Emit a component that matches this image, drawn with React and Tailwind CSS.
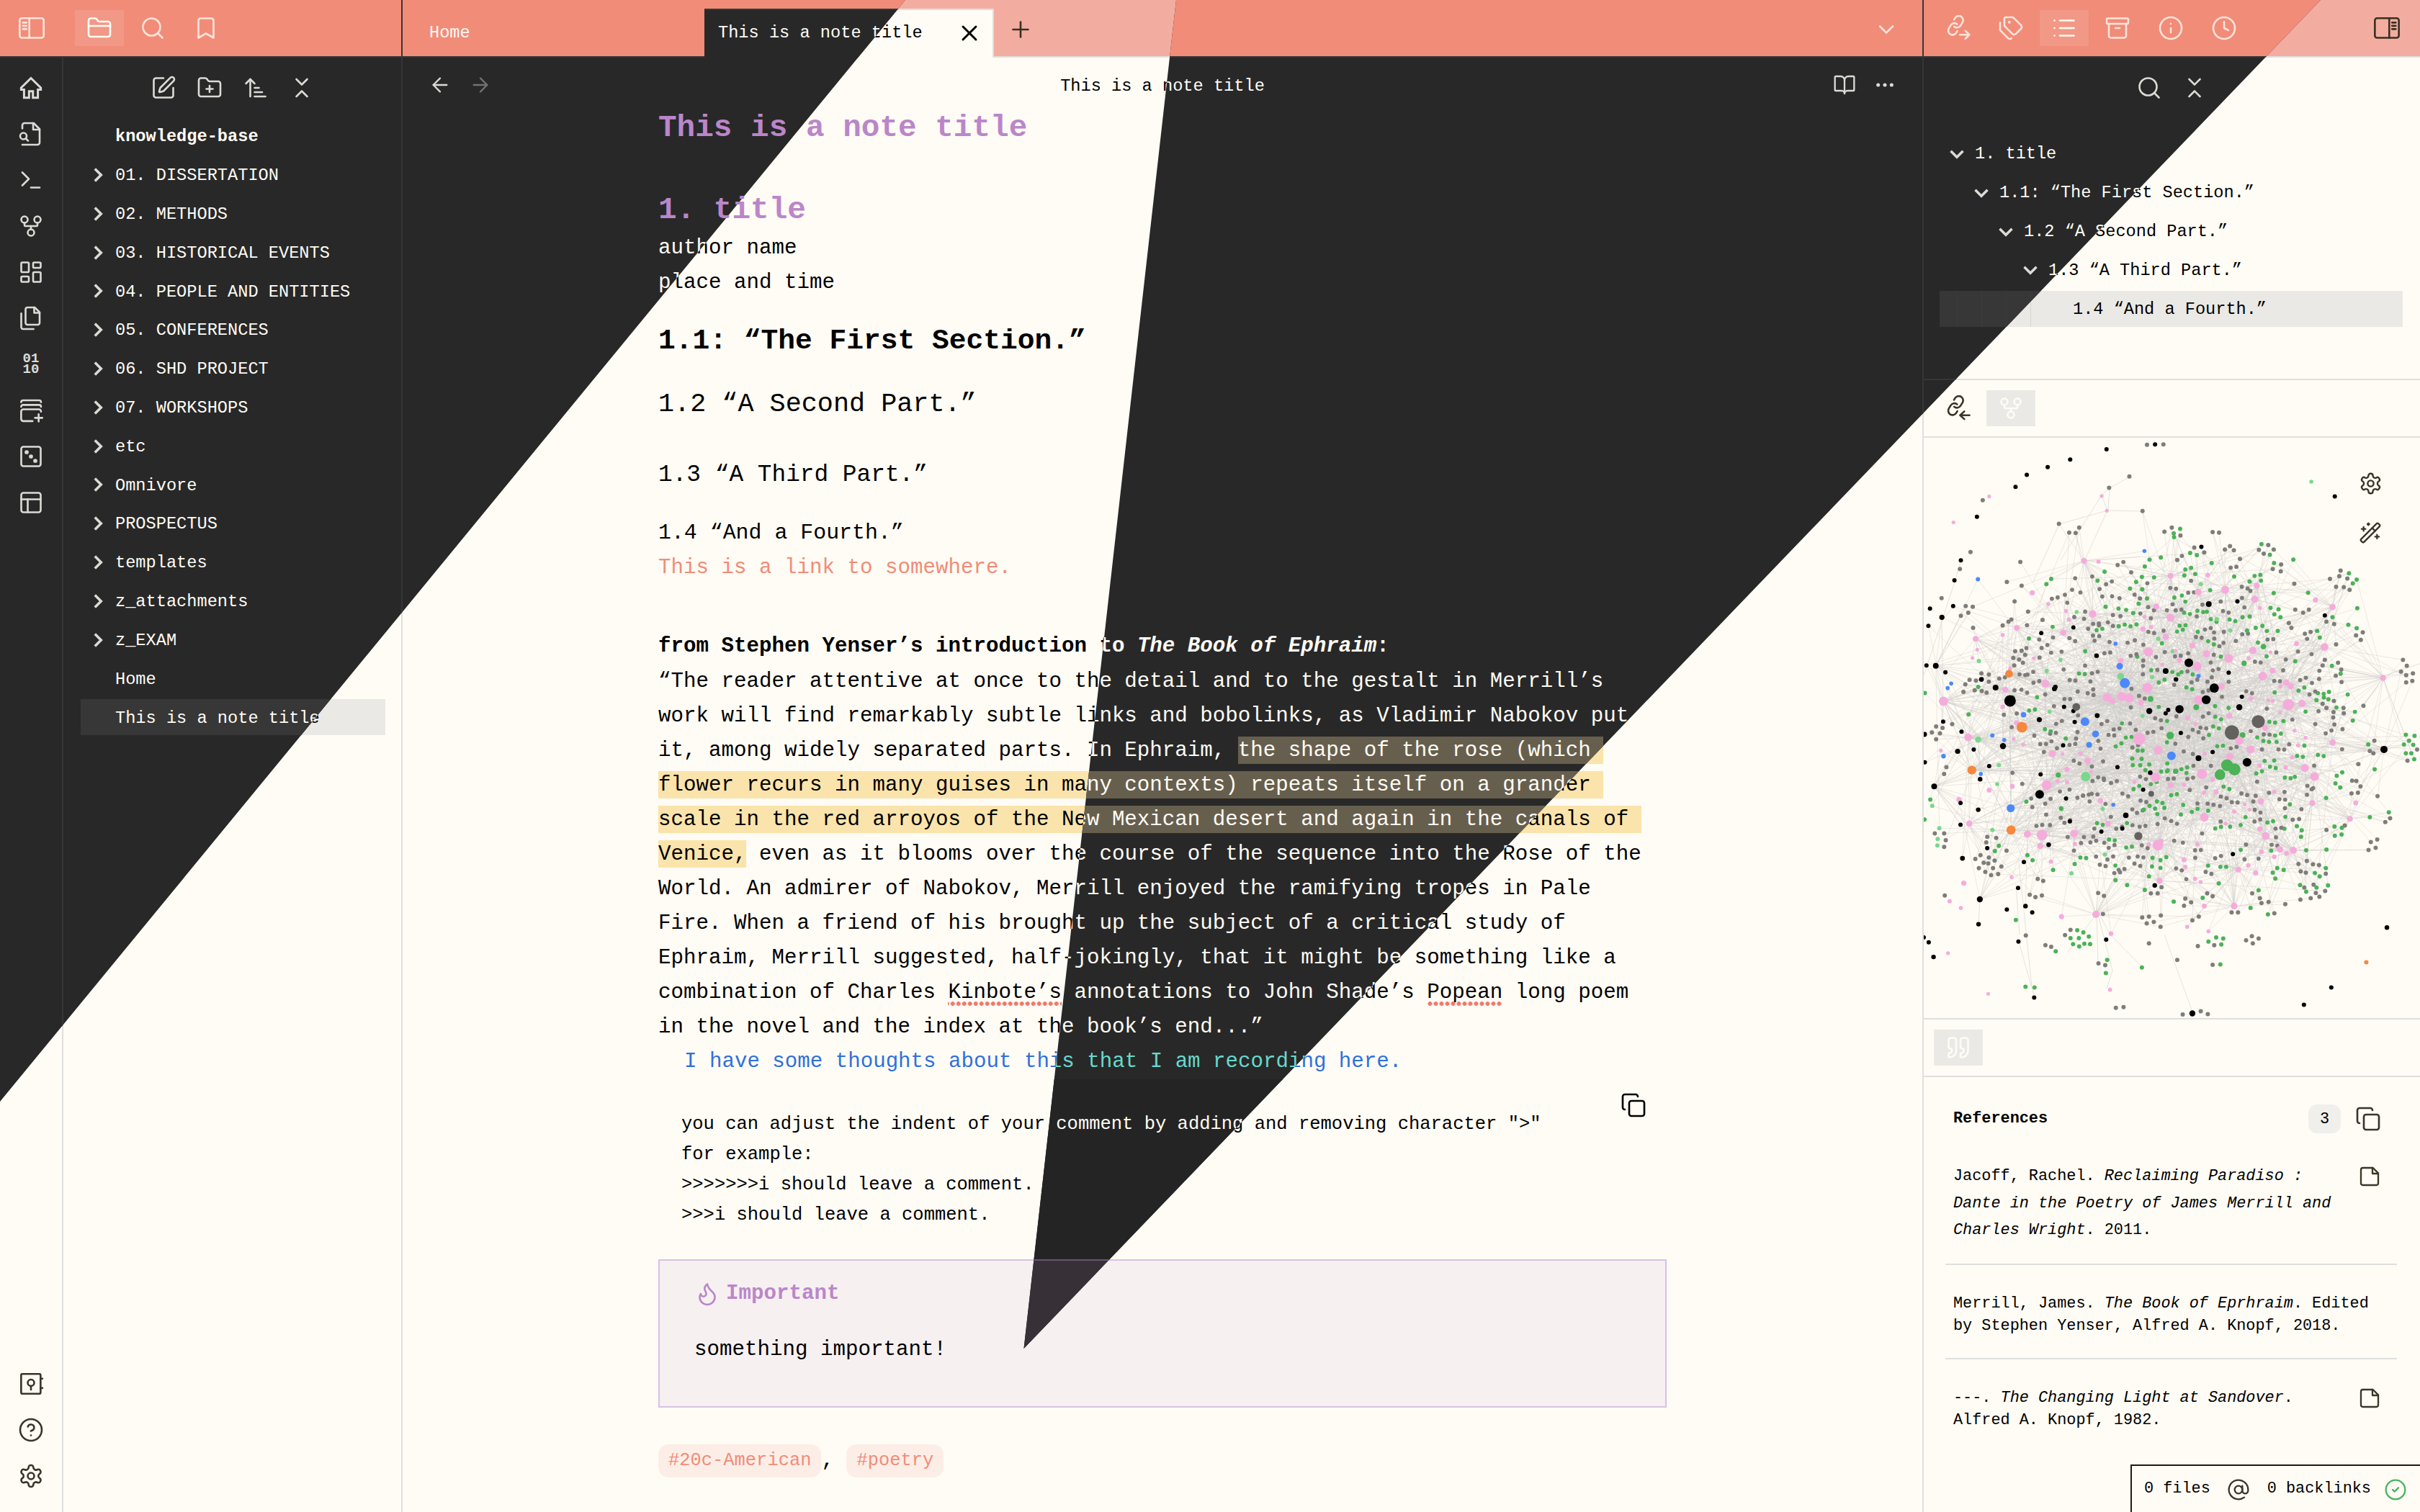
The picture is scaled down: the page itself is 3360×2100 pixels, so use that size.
import React from "react";
import {
  Archive,
  ArrowLeft,
  ArrowRight,
  ArrowUpNarrowWide,
  AtSign,
  BookOpen,
  Bookmark,
  ChevronDown,
  ChevronsDownUp,
  CircleCheck,
  Clock,
  Copy,
  Flame,
  FolderClosed,
  FolderPlus,
  GitFork,
  Info,
  LayoutDashboard,
  List,
  PanelsTopLeft,
  Plus,
  Quote,
  Search,
  SquarePen,
  Tags,
  Terminal,
  WandSparkles,
  X,
} from "lucide-react";

/* ---------- icons ---------- */

function Svg({ size = 36, w = 1.75, className = "", children }) {
  return (
    <svg
      width={size}
      height={size}
      viewBox="0 0 24 24"
      fill="none"
      stroke="currentColor"
      strokeWidth={w}
      strokeLinecap="round"
      strokeLinejoin="round"
      className={"shrink-0 " + className}
    >
      {children}
    </svg>
  );
}

const SidebarIcon = ({ right }) => (
  <Svg>
    <g transform={right ? "matrix(-1 0 0 1 24 0)" : undefined}>
      <rect x="0.9" y="2.8" width="22.2" height="18.2" rx="2" />
      <path d="M9.8 3v18M3.8 6.9h3.4M3.8 9.9h3.4M3.8 12.9h3.4" />
    </g>
  </Svg>
);

const HomeIcon = () => (
  <Svg w={2}>
    <path
      strokeLinejoin="miter"
      d="M12 3 2.9 12v1.6h2.7v7.6h4.6v-6h3.6v6h4.6v-7.6h2.7V12Z"
    />
  </Svg>
);

const FileSearchIcon = () => (
  <Svg>
    <path d="M4 22h14a2 2 0 0 0 2-2V7.5L14.5 2H6a2 2 0 0 0-2 2v3" />
    <path d="M14 2v6h6" />
    <circle cx="5" cy="14" r="3" />
    <path d="m9.3 18.3-2.1-2.1" />
  </Svg>
);

const DocumentsIcon = () => (
  <Svg>
    <path d="M15.5 2H8.6c-.4 0-.8.2-1.1.5-.3.3-.5.7-.5 1.1v12.8c0 .4.2.8.5 1.1.3.3.7.5 1.1.5h9.8c.4 0 .8-.2 1.1-.5.3-.3.5-.7.5-1.1V6.5L15.5 2z" />
    <path d="M3 7.6v12.8c0 .4.2.8.5 1.1.3.3.7.5 1.1.5h9.8" />
    <path d="M15 2v5h5" />
  </Svg>
);

const StackPlusIcon = () => (
  <Svg>
    <path d="M2.9 4.4a1.7 1.7 0 0 1 1.7-1.7h15a1.7 1.7 0 0 1 1.7 1.7" />
    <path d="M2.9 8.6a1.7 1.7 0 0 1 1.7-1.7h15a1.7 1.7 0 0 1 1.7 1.7" />
    <path d="M21.3 13.2V13a2 2 0 0 0-2-2H4.9a2 2 0 0 0-2 2v6.9a2 2 0 0 0 2 2h8.6" />
    <path d="M19.1 15.5v6.8M15.7 18.9h6.8" />
  </Svg>
);

const DiceIcon = () => (
  <Svg>
    <rect x="3" y="3" width="18" height="18" rx="2" />
    <g fill="currentColor" strokeWidth="1">
      <circle cx="8" cy="8" r="1.4" />
      <circle cx="12" cy="12" r="1.4" />
      <circle cx="16" cy="16" r="1.4" />
    </g>
  </Svg>
);

const VaultIcon = () => (
  <Svg>
    <rect x="2.9" y="2.8" width="18" height="18.4" rx="1.2" />
    <circle cx="12" cy="11" r="3" />
    <path d="M12 14v3.4M21 7.2h1.6M21 15.9h1.6" />
  </Svg>
);

const HelpIcon = () => (
  <Svg>
    <circle cx="12" cy="12" r="10" />
    <path d="M9.09 9a3 3 0 0 1 5.83 1c0 2-3 3-3 3" />
    <path d="M12 17h.01" />
  </Svg>
);

const GearIcon = ({ size }) => (
  <Svg size={size}>
    <path d="M12.22 2h-.44a2 2 0 0 0-2 2v.18a2 2 0 0 1-1 1.73l-.43.25a2 2 0 0 1-2 0l-.15-.08a2 2 0 0 0-2.73.73l-.22.38a2 2 0 0 0 .73 2.73l.15.1a2 2 0 0 1 1 1.72v.51a2 2 0 0 1-1 1.74l-.15.09a2 2 0 0 0-.73 2.73l.22.38a2 2 0 0 0 2.73.73l.15-.08a2 2 0 0 1 2 0l.43.25a2 2 0 0 1 1 1.73V20a2 2 0 0 0 2 2h.44a2 2 0 0 0 2-2v-.18a2 2 0 0 1 1-1.73l.43-.25a2 2 0 0 1 2 0l.15.08a2 2 0 0 0 2.73-.73l.22-.39a2 2 0 0 0-.73-2.73l-.15-.08a2 2 0 0 1-1-1.74v-.5a2 2 0 0 1 1-1.74l.15-.09a2 2 0 0 0 .73-2.73l-.22-.38a2 2 0 0 0-2.73-.73l-.15.08a2 2 0 0 1-2 0l-.43-.25a2 2 0 0 1-1-1.73V4a2 2 0 0 0-2-2z" />
    <circle cx="12" cy="12" r="3" />
  </Svg>
);

const LinkArrowIcon = ({ incoming }) => (
  <Svg>
    <g transform="translate(.6 -.1) scale(.8)" strokeWidth="2.2">
      <path d="M10 13a5 5 0 0 0 7.54.54l3-3a5 5 0 0 0-7.07-7.07l-1.72 1.71" transform="rotate(-14 12 12)" />
      <path d="M14 11a5 5 0 0 0-7.54-.54l-3 3a5 5 0 0 0 7.07 7.07l1.71-1.71" transform="rotate(-14 12 12)" />
    </g>
    {incoming ? (
      <path d="M23 18.5h-8.6M18.2 14.9l-3.9 3.6 3.9 3.6" />
    ) : (
      <path d="M14.2 18.2h8.6M19.2 14.6l3.7 3.6-3.7 3.6" />
    )}
  </Svg>
);

const StickyIcon = () => (
  <Svg size={32}>
    <path d="M15.5 3H5a2 2 0 0 0-2 2v14c0 1.1.9 2 2 2h14a2 2 0 0 0 2-2V8.5L15.5 3Z" />
    <path d="M15 3v6h6" />
  </Svg>
);

const DotsIcon = () => (
  <svg width="32" height="32" viewBox="0 0 24 24" fill="currentColor">
    <circle cx="5" cy="12" r="1.9" />
    <circle cx="12" cy="12" r="1.9" />
    <circle cx="19" cy="12" r="1.9" />
  </svg>
);

const Fold = ({ open }) => (
  <svg
    width="24"
    height="24"
    viewBox="0 0 24 24"
    fill="none"
    stroke="currentColor"
    strokeWidth="3.6"
    className="shrink-0 text-(--icon)"
  >
    <path d={open ? "M3.5 7.8l8.5 8.5 8.5-8.5" : "M7.8 3.5l8.5 8.5-8.5 8.5"} />
  </svg>
);

const I = { size: 36, strokeWidth: 1.75, className: "shrink-0" };
const I32 = { size: 32, strokeWidth: 1.75, className: "shrink-0" };

/* ---------- top bar ---------- */

const TabIcon = ({ active, children }) => (
  <div
    className={
      "flex h-[50px] w-[68px] items-center justify-center " +
      (active ? "bg-white/10 text-[#fffcf5]" : "text-(--headicon)")
    }
  >
    {children}
  </div>
);

function TopBar() {
  return (
    <header className="flex h-[80px] shrink-0 text-[23.65px]">
      <div className="flex w-[559px] items-center border-r-2 border-b-2 border-(--line) bg-(--accent) pl-[26px] text-(--headicon)">
        <SidebarIcon />
        <div className="ml-[42px] flex gap-[6px]">
          <TabIcon active><FolderClosed {...I} /></TabIcon>
          <TabIcon><Search {...I} /></TabIcon>
          <TabIcon><Bookmark {...I} /></TabIcon>
        </div>
      </div>

      <div className="flex w-[2110px] bg-(--accent)">
        <div className="flex w-[419px] items-center border-b-2 border-(--line) pt-[14px] pl-[37px] text-[#fffcf5]">
          Home
        </div>
        <div className="mt-[12px] flex w-[402px] items-center justify-between border-t-2 border-r-2 border-(--line) bg-(--bg) pr-[14px] pb-[2px] pl-[19px] text-(--text)">
          <span>This is a note title</span>
          <X {...I} strokeWidth={2} />
        </div>
        <div className="flex flex-1 items-center justify-between border-b-2 border-(--line) pt-[4px] pr-[32px] pl-[19px] text-(--headicon)">
          <Plus {...I} />
          <ChevronDown {...I} />
        </div>
      </div>

      <div className="flex w-[691px] items-center justify-between border-b-2 border-l-2 border-(--line) bg-(--accent) pr-[28px] pl-[13px] text-(--headicon)">
        <div className="flex gap-[6px]">
          <TabIcon><LinkArrowIcon /></TabIcon>
          <TabIcon><Tags {...I} /></TabIcon>
          <TabIcon active><List {...I} /></TabIcon>
          <TabIcon><Archive {...I} /></TabIcon>
          <TabIcon><Info {...I} /></TabIcon>
          <TabIcon><Clock {...I} /></TabIcon>
        </div>
        <SidebarIcon right />
      </div>
    </header>
  );
}

/* ---------- ribbon and file tree ---------- */

function Ribbon() {
  return (
    <nav className="flex w-[88px] flex-col items-center justify-between border-r-2 border-(--line) pt-[24px] pb-[32px] text-(--icon)">
      <div className="flex flex-col items-center gap-[28px]">
        <HomeIcon />
        <FileSearchIcon />
        <Terminal {...I} />
        <GitFork {...I} />
        <LayoutDashboard {...I} />
        <DocumentsIcon />
        <div className="flex h-[36px] flex-col justify-center text-[19px] leading-[15.5px] font-bold">
          <span>01</span>
          <span>10</span>
        </div>
        <StackPlusIcon />
        <DiceIcon />
        <PanelsTopLeft {...I} />
      </div>
      <div className="flex flex-col items-center gap-[28px]">
        <VaultIcon />
        <HelpIcon />
        <GearIcon size={36} />
      </div>
    </nav>
  );
}

const FOLDERS = [
  "01. DISSERTATION",
  "02. METHODS",
  "03. HISTORICAL EVENTS",
  "04. PEOPLE AND ENTITIES",
  "05. CONFERENCES",
  "06. SHD PROJECT",
  "07. WORKSHOPS",
  "etc",
  "Omnivore",
  "PROSPECTUS",
  "templates",
  "z_attachments",
  "z_EXAM",
];

function FileTree() {
  return (
    <aside className="w-[471px] border-r-2 border-(--line) pt-[24px] text-[23.65px] text-(--text)">
      <div className="flex justify-center gap-[28px] text-(--icon)">
        <SquarePen {...I} />
        <FolderPlus {...I} />
        <ArrowUpNarrowWide {...I} />
        <ChevronsDownUp {...I} />
      </div>
      <div className="mt-[30px] mb-[8px] pl-[72px] leading-[40px] font-bold">knowledge-base</div>
      <div className="flex flex-col gap-[4px] pr-[22px] pl-[24px]">
        {FOLDERS.map((name) => (
          <div key={name} className="flex h-[49.82px] items-center gap-[12px] pl-[12px]">
            <Fold />
            <span className="pt-[2px]">{name}</span>
          </div>
        ))}
        <div className="flex h-[49.82px] items-center pt-[2px] pl-[48px]">Home</div>
        <div className="flex h-[49.82px] items-center bg-(--hover) pt-[2px] pl-[48px]">
          This is a note title
        </div>
      </div>
    </aside>
  );
}

/* ---------- note ---------- */

const Mark = ({ children }) => (
  <span className="bg-(--mark) pt-[3px] pb-[2px]">{children}</span>
);

const Misspelt = ({ children }) => (
  <span className="bg-[radial-gradient(circle,#f0786c_2.6px,transparent_3.2px)] bg-[length:8px_8px] bg-bottom bg-repeat-x pb-[3px]">
    {children}
  </span>
);

const Tag = ({ children }) => (
  <span className="flex h-[46px] items-center rounded-[14px] bg-(--tag) px-[14px] text-[25.45px] text-[#f28c78]">
    {children}
  </span>
);

function Note() {
  return (
    <main className="w-[2110px] text-(--text)">
      <div className="flex h-[76px] items-center justify-between pr-[36px] pl-[36px] text-[23.65px]">
        <div className="flex w-[120px] gap-[24px] text-(--icon)">
          <ArrowLeft {...I32} />
          <ArrowRight {...I32} className="text-(--faint)" />
        </div>
        <span className="pt-[3px]">This is a note title</span>
        <div className="flex w-[120px] justify-end gap-[24px] text-(--icon)">
          <BookOpen {...I32} />
          <DotsIcon />
        </div>
      </div>

      <article className="ml-[355px] w-[1400px] text-[29.17px] leading-[48px] whitespace-pre">
        <h1 className="text-[42.7px] leading-[43px] font-bold text-[#bb86c9]">This is a note title</h1>
        <h1 className="mt-[64.6px] text-[42.7px] leading-[56px] font-bold text-[#bb86c9]">1. title</h1>
        <p className="mt-[1px]">author name</p>
        <p>place and time</p>
        <h2 className="mt-[29px] text-[39.6px] leading-[56px] font-bold">1.1: “The First Section.”</h2>
        <h3 className="mt-[31px] text-[36.8px] leading-[56px]">1.2 “A Second Part.”</h3>
        <h4 className="mt-[47.5px] text-[32.8px] leading-[48px]">1.3 “A Third Part.”</h4>
        <h5 className="mt-[32px] text-[29.9px] leading-[48px]">1.4 “And a Fourth.”</h5>
        <p className="mt-[1px] text-[#f28c78]">This is a link to somewhere.</p>
        <p className="mt-[60.5px] font-bold">
          from Stephen Yenser’s introduction to <em>The Book of Ephraim</em>:
        </p>
        <p className="mt-[1px]">“The reader attentive at once to the detail and to the gestalt in Merrill’s</p>
        <p>work will find remarkably subtle links and bobolinks, as Vladimir Nabokov put</p>
        <p>it, among widely separated parts. In Ephraim, <Mark>{"the shape of the rose (which "}</Mark></p>
        <p><Mark>{"flower recurs in many guises in many contexts) repeats itself on a grander "}</Mark></p>
        <p><Mark>{"scale in the red arroyos of the New Mexican desert and again in the canals of "}</Mark></p>
        <p><Mark>Venice,</Mark> even as it blooms over the course of the sequence into the Rose of the</p>
        <p>World. An admirer of Nabokov, Merrill enjoyed the ramifying tropes in Pale</p>
        <p>Fire. When a friend of his brought up the subject of a critical study of</p>
        <p>Ephraim, Merrill suggested, half-jokingly, that it might be something like a</p>
        <p>combination of Charles <Misspelt>Kinbote’s</Misspelt> annotations to John Shade’s <Misspelt>Popean</Misspelt> long poem</p>
        <p>in the novel and the index at the book’s end...”</p>
        <p className="pl-[36px] text-[29.13px] text-(--comment)">I have some thoughts about this that I am recording here.</p>

        <div className="relative h-[250px] bg-(--code) pt-[42px] pl-[32px] text-[25.5px] leading-[42.2px]">
          <p>you can adjust the indent of your comment by adding and removing character "&gt;"</p>
          <p>for example:</p>
          <p>&gt;&gt;&gt;&gt;&gt;&gt;&gt;i should leave a comment.</p>
          <p>&gt;&gt;&gt;i should leave a comment.</p>
          <Copy size={36} strokeWidth={1.75} className="absolute top-[18px] right-[28px]" />
        </div>

        <section className="h-[206px] border-2 border-(--callline) bg-(--call) pt-[22px] pl-[48px]">
          <div className="flex items-center gap-[8px] font-bold text-[#bb86c9]">
            <Flame {...I} />
            <span>Important</span>
          </div>
          <p className="mt-[30px]">something important!</p>
        </section>

        <div className="mt-[50px] flex items-center">
          <Tag>#20c-American</Tag>
          <span>{", "}</span>
          <Tag>#poetry</Tag>
        </div>
      </article>
    </main>
  );
}

/* ---------- graph ---------- */

const SMALL = 2.9;
const PINK = [
  228,171,2.6, 117,240,2.6, 578,170,2.6, 594,209,2.6, 523,342,4.2, 568,344,3, 792,382,4, 362,427,3.6, 412,457,2.8, 550,483,5.2,
  314,520,4, 186,549,4, 270,539,2.8, 458,533,4.4, 467,475,2.8, 476,498,3, 748,463,4, 792,493,5.4, 878,425,4.6, 962,419,5.4,
  1060,408,4.2, 1054,444,5, 908,380,3.2, 1243,446,3.6, 1296,465,4.4, 1271,571,5.4, 1184,562,3.4, 1070,467,2.7, 1048,580,5.2, 973,601,6,
  904,589,5, 875,622,6.2, 860,567,4, 777,544,4.2, 723,584,6.4, 706,523,3.6, 732,518,2.9, 638,607,3.6, 1079,648,6, 1109,634,4,
  1152,665,4.4, 1166,675,4.2, 1159,724,8, 1201,721,5, 1453,653,4.2, 951,675,4.4, 720,679,6.8, 595,705,6, 612,715,4, 640,702,6.4,
  664,707,6.2, 700,719,4, 403,668,5.6, 278,684,4.2, 86,715,6.4, 270,730,3.2, 367,601,2.7, 293,628,2.6, 191,578,2.6, 176,600,2.6,
  880,712,6.4, 975,754,4, 1042,708,3.4, 1086,786,4, 1006,820,6, 1041,843,5.6, 976,862,5, 846,760,3.2, 870,776,2.8, 695,815,8.4,
  753,845,6, 534,873,4.6, 512,854,3.2, 424,854,5, 163,811,5.4, 78,846,2.7, 313,772,3.6, 407,938,7, 470,896,3.6, 745,917,6.8,
  680,929,3, 793,938,4, 890,908,7, 934,956,3.4, 1210,892,5.6, 1240,915,6, 1296,825,4.4, 1233,985,4, 1368,985,3.4, 1350,1027,4,
  1150,891,3, 1170,864,2.8, 1189,832,2.8, 1178,793,2.7, 1073,981,4.6, 1115,956,3, 897,1023,6, 990,1008,3, 964,1040,2.6, 1070,1054,3.6,
  1088,1073,5.4, 1132,1108,4.6, 1153,1119,3.4, 1174,1111,5, 1115,1128,3.2, 1075,1115,3.4, 753,1097,7.4, 763,1087,3.4, 725,1095,3, 834,1136,3.4,
  838,1155,3, 876,1095,3, 1034,1151,3.2, 1003,1162,4, 1057,1171,3.6, 868,1187,3, 886,1195,2.7, 758,1192,4.2, 597,1040,4, 574,979,3.8,
  492,1066,5.4, 495,1094,2.8, 392,1070,7.4, 387,1099,4.4, 347,1068,5, 420,1141,3, 166,1040,4.4, 134,976,3.6, 228,951,3.4, 298,1182,2.7,
  149,1198,3.6, 105,1246,3, 140,1264,2.8, 453,1287,3.6, 560,1281,5, 607,1332,3.2, 844,1314,2.8, 910,1326,2.8, 990,1259,4.6, 897,1259,3.4,
  100,1384,2.6, 225,1492,2.6, 604,1481,2.9, 1134,676,3, 1096,712,2.8, 1110,714,2.8, 1133,745,2.6, 820,607,3.4, 808,581,2.6, 766,618,2.6,
  711,491,2.7, 1103,585,2.6, 1035,601,3, 300,941,3.4, 334,830,2.7, 304,815,2.7, 456,855,2.6, 470,930,2.9, 545,903,2.7, 834,937,3,
  896,958,3, 924,923,3.2, 1069,886,3.2, 1023,989,2.7, 1038,1003,2.7, 898,854,2.8, 1212,812,2.7, 441,927,3,
];
const BLACK = [
  593,46,3, 480,73,3, 410,93,3, 345,114,3, 310,146,3, 190,225,3, 744,33,3, 1303,171,3, 140,341,3, 120,394,3,
  116,462,3, 44,469,3, 81,492,3.6, 39,515,3, 62,621,4, 33,620,3, 92,638,3, 204,657,3.4, 248,679,4, 293,714,8,
  434,677,3.2, 431,682,3.4, 490,519,2.9, 390,534,3, 562,594,3.2, 888,305,3, 911,457,4, 1000,450,3, 1272,487,3, 849,613,6,
  777,635,4, 809,657,3.2, 928,680,6.4, 903,711,6.2, 820,736,5.8, 785,738,3, 777,747,3, 726,741,4.2, 1014,703,3, 1006,731,4.2,
  973,639,3, 824,799,3, 923,850,3, 879,866,4, 1030,877,6, 1456,843,5, 461,730,3, 490,741,3, 494,770,3, 564,753,3.4,
  384,764,3.6, 458,832,3, 271,834,4.2, 180,843,3, 130,848,3.6, 142,796,3, 85,769,3, 27,803,3.4, 28,877,3, 228,887,3,
  200,922,3.2, 57,941,4, 388,909,3, 385,962,6, 467,973,3, 139,985,3, 194,1003,3.2, 139,1043,3, 145,1132,3.4, 222,1105,3,
  336,1142,3, 413,1096,3.2, 479,1034,3, 577,1061,3, 642,1053,3, 653,1018,3.8, 627,890,3, 707,950,3, 729,905,3.2, 986,1121,3,
  743,1204,3.2, 318,1211,3, 199,1241,4.2, 341,1259,3.2, 283,1268,3, 362,1276,3, 195,1307,3.2, 319,1353,3, 592,1348,3, 25,1342,2.8,
  40,1355,3, 55,1394,3.2, 368,1502,3, 860,1544,4.2, 1465,1316,3.2, 1292,1475,3, 1207,1521,3,
];
const BLUE = [
  193,391,3, 711,316,2.8, 621,562,2.8, 634,622,4.6, 650,667,7, 110,668,2.8, 99,680,2.8, 335,751,3.8, 526,769,6, 559,802,4.8,
  539,831,4, 238,806,3, 275,818,2.8, 86,861,3.2, 202,908,2.8, 795,860,6, 879,648,3, 295,999,5.6, 614,990,2.8,
];
const ORANGE = [290,642,5.4, 330,784,7.4, 174,898,6.2, 296,1057,6.4, 1401,1408,3];
const MINT = [
  1230,132,2.8, 886,404,3, 936,497,3, 500,478,2.8, 978,527,3, 754,549,3, 799,582,3, 637,649,4.8, 705,754,2.8, 528,915,6.6,
  196,608,3, 407,635,3, 194,817,4.2, 258,885,3, 253,935,2.8, 416,743,2.8, 73,1052,3, 68,1081,3, 67,1098,3, 51,993,3,
  238,1057,3, 588,1122,3, 484,1172,3, 735,651,3, 581,1001,3, 450,605,2.8,
];
const GREEN = [
  968,885,8.2, 991,896,8.4, 946,910,7.4, 791,806,5.2, 872,731,4, 730,709,4, 808,901,3.8, 1016,805,4, 443,911,3.6, 1021,614,3.6,
  1081,570,3.8, 301,706,3.6, 452,1000,3.2, 822,257,3, 802,269,3, 803,279,3, 853,321,3, 874,327,3, 920,348,3, 1075,298,3,
  1101,326,3, 1114,348,3, 1174,339,3, 990,384,3, 1038,397,3, 835,381,3, 762,333,3, 727,339,3, 712,357,3, 587,371,3,
  565,395,3, 421,390,3, 406,404,3, 1347,375,3, 1371,392,3, 1359,402,3, 1220,427,3, 1373,468,3, 1296,492,3, 1345,512,3,
  1371,521,3, 1248,528,3, 1103,467,3, 1128,471,3, 1115,484,3, 1134,492,3, 1113,428,3, 1038,490,3, 1016,492,3, 1030,527,3,
  1057,520,3, 1078,515,3, 741,386,3, 703,385,3, 685,398,3, 704,418,3, 719,442,3, 804,440,3, 693,456,3, 676,481,3,
  590,464,3, 631,516,3, 1524,804,3, 1551,807,3, 1534,820,3, 1518,830,3, 1547,831,3, 1524,853,3, 1541,853,3, 1550,869,3,
  1407,830,3, 1359,766,3, 1427,896,3, 1326,904,3, 1309,913,3, 1305,933,3, 1320,944,3, 1276,972,3, 1471,1010,3, 1412,1023,3,
  1325,1051,3, 1302,1048,3, 1303,1072,3, 1324,1069,3, 1277,1109,3, 1214,1111,3, 1275,1158,3, 1282,1204,3, 1241,1171,3, 1256,1180,3,
  1195,1203,3, 1214,1221,3, 1246,1210,3, 1124,1158,3, 1110,1170,3, 1144,1163,3, 1118,1186,3, 1185,1047,3, 1200,1058,3, 1198,1075,3,
  502,1323,3, 481,1344,3, 521,1329,3, 538,1340,3, 507,1344,3, 489,1360,3, 524,1359,3, 542,1360,3, 508,1366,3, 435,1379,3,
  595,1402,3, 591,1437,3, 703,1422,3, 341,1473,3, 369,1475,3, 311,1296,3, 934,1342,3, 956,1345,3, 910,1353,3, 950,1361,3,
  947,1414,3, 1095,1281,3, 1066,1217,3, 1041,1264,3, 942,1199,3, 892,1237,3, 802,1247,3, 712,1216,3, 657,1203,3, 621,1190,3,
  45,976,3, 27,1029,3, 28,693,3, 164,750,3, 194,677,3, 705,846,3, 690,846,3, 673,867,3, 675,885,3, 698,885,3,
  702,868,3, 714,898,3, 726,883,3, 750,981,3, 773,998,3, 727,993,3, 709,1003,3, 744,1000,3, 751,1015,3, 767,985,3,
  427,1163,3, 494,1147,3, 347,1124,3, 363,1137,3, 258,1099,3, 246,1113,3, 1321,642,3, 1294,621,3, 1246,712,3, 1269,705,3,
  1285,690,3, 1283,710,3,
];
const GRAY = [
  1065,769,9, 983,798,10, 499,730,5.4, 692,1073,5.6, 732,961,4, 719,34,3, 770,33,3, 664,118,3, 601,148,3, 208,181,3,
  705,210,3, 445,244,3, 508,254,3, 477,267,3, 497,268,3, 170,319,3, 137,364,3, 325,345,3, 283,398,3, 329,408,3,
  80,441,3, 155,462,3, 177,464,3, 163,480,3, 140,488,3, 178,520,3, 307,450,3, 349,477,3, 270,514,3, 297,498,3,
  394,499,3, 288,504,3, 773,265,3, 796,254,3, 823,275,3, 923,266,3, 943,267,3, 866,307,3, 897,320,3, 813,340,3,
  961,312,3, 977,303,3, 989,314,3, 1008,337,3, 1067,313,3, 1096,300,3, 1113,312,3, 1082,323,3, 1136,352,3, 1110,364,3,
  1135,370,3, 1177,403,3, 1321,368,3, 1288,390,3, 1317,383,3, 1342,389,3, 1307,411,3, 1331,412,3, 1349,419,3, 1515,605,3,
  1509,636,3, 1527,621,3, 1546,641,3, 1525,646,3, 1525,665,3, 1544,661,3, 1559,843,3, 1529,873,3, 1390,532,3, 1369,540,3,
  1384,552,3, 1392,727,3, 1426,820,3, 1412,847,3, 1423,853,3, 1376,882,3, 1436,967,3, 1475,1026,3, 1460,1036,3, 1435,1082,3,
  1415,1089,3, 1408,1110,3, 1430,1104,3, 1383,941,3, 1357,926,3, 1370,927,3, 1355,960,3, 1375,958,3, 1334,1045,3, 1277,1057,3,
  1216,1139,3, 1235,1148,3, 1254,1150,3, 1275,1173,3, 1273,1219,3, 1255,1234,3, 1228,1238,3, 1196,1242,3, 1149,1254,3, 1115,1278,3,
  1097,1248,3, 1075,1251,3, 1046,1225,3, 1070,1238,3, 1237,1202,3, 1208,1210,3, 1244,1224,3, 1197,1167,3, 1190,1147,3, 1213,1170,3,
  982,1276,3, 1002,1276,3, 1045,1339,3, 1066,1345,3, 1027,1350,3, 1048,1358,3, 928,1363,3, 877,1365,3, 923,1415,3, 813,1402,3,
  725,1358,3, 704,1289,3, 725,1287,3, 740,1301,3, 718,1305,3, 762,1284,3, 761,1314,3, 622,1529,3, 646,1527,3, 830,1547,3,
  886,1538,3, 908,1546,3, 568,1411,3, 589,1416,3, 403,1363,3, 421,1367,3, 464,1336,3, 481,1322,3, 342,1337,3, 354,1229,3,
  372,1235,3, 392,1231,3, 379,1187,3, 396,1192,3, 90,1231,3, 185,1134,3, 201,1124,3, 211,1144,3, 196,1158,3, 227,1130,3,
  225,1146,3, 245,1138,3, 240,1158,3, 266,1154,3, 256,1174,3, 234,1177,3, 216,1168,3, 282,1112,3, 250,1078,3, 219,1090,3,
  222,1075,3, 59,1066,3, 88,1066,3, 93,1084,3, 88,1102,3, 63,782,3, 83,786,3, 75,800,3, 50,798,3, 63,816,3,
  154,670,3, 167,658,3, 187,660,3, 204,641,3, 227,644,3, 183,686,3, 205,688,3, 220,692,3, 227,663,3, 148,690,3,
  309,582,3, 329,581,3, 340,592,3, 303,600,3, 321,604,3, 333,613,3, 306,620,3, 88,908,3, 95,890,3, 113,776,3,
  1168,520,3, 1180,472,3, 1160,507,3, 1301,510,3, 1307,564,3, 1277,504,3, 1272,605,3, 1313,613,3, 1265,620,3, 1323,631,3,
  1306,647,3, 1330,733,3, 1300,714,3, 1265,722,3, 1277,733,3, 1299,744,3, 1331,747,3, 1298,758,3, 567,1224,3, 585,1232,3,
  582,1280,3, 838,1239,3, 856,1249,3, 834,1258,3, 731,1225,3, 752,1225,3, 764,1209,3, 906,1225,3, 923,1233,3, 880,1287,3,
  860,1297,3,
];

const COLORS = {
  pink: "#f5acdb",
  black: "#000000",
  blue: "#4c88f8",
  orange: "#f6873c",
  mint: "#7bd78b",
  green: "#4bb257",
  gray: "#7f7d79",
  dark: "#64625f",
};

function buildGraph() {
  let seed = 20240917;
  const rand = () => {
    seed = (seed * 1664525 + 1013904223) % 4294967296;
    return seed / 4294967296;
  };
  const nodes = [];
  const add = (list, color) => {
    for (let i = 0; i < list.length; i += 3) {
      nodes.push({
        x: (list[i] - 24.6) / 2.24,
        y: (list[i + 1] - 15.3) / 1.912,
        r: list[i + 2],
        c: color,
      });
    }
  };
  add(GRAY.slice(15), "gray");
  add(GREEN.slice(9), "green");
  add(MINT, "mint");
  add(PINK, "pink");
  add(BLUE, "blue");
  add(ORANGE, "orange");
  add(BLACK, "black");
  add(GRAY.slice(0, 15), "dark");
  add(GREEN.slice(0, 9), "green");

  // Leaf notes scattered through the body of the vault, in little groups.
  const filler = [];
  const blocked = (x, y, d) =>
    nodes.some((n) => Math.hypot(n.x - x, n.y - y) < n.r + d) ||
    filler.some((n) => Math.hypot(n.x - x, n.y - y) < d + 3);
  let tries = 0;
  while (filler.length < 540 && tries < 9000) {
    tries += 1;
    const a = rand() * Math.PI * 2;
    const q = Math.pow(rand(), 0.55);
    const x = 345 + Math.cos(a) * q * 240 + (rand() - 0.5) * 30;
    const y = 390 + Math.sin(a) * q * 228;
    if (x < 20 || blocked(x, y, 4.4)) continue;
    const c = rand() < 0.27 + (x > 300 ? 0.04 : -0.1) ? "green" : "gray";
    filler.push({ x, y, r: SMALL, c });
    if (rand() < 0.35) {
      filler.push({ x: x + 8, y: y + (rand() - 0.5) * 9, r: SMALL, c });
    }
  }
  const all = [...filler, ...nodes];

  const hubs = nodes.filter((n) => n.r >= 4 && n.y > 100 && n.y < 740);
  const lines = [];
  const link = (p, q) =>
    lines.push(`M${p.x.toFixed(1)} ${p.y.toFixed(1)}L${q.x.toFixed(1)} ${q.y.toFixed(1)}`);
  const inside = (n) => Math.hypot((n.x - 330) / 365, (n.y - 395) / 300) < 1;
  all.forEach((n) => {
    if (!inside(n)) return;
    const sorted = hubs
      .filter((h) => h !== n)
      .map((h) => ({ h, d: Math.hypot(h.x - n.x, h.y - n.y) }))
      .sort((p, q) => p.d - q.d);
    link(n, sorted[Math.floor(rand() * 4)].h);
    if (rand() < 0.7) link(n, sorted[Math.floor(rand() * 24)].h);
  });
  const central = hubs.filter((h) => h.r >= 5.4);
  hubs.forEach((h) => {
    const count = Math.round(h.r * 1.9);
    for (let i = 0; i < count; i += 1) {
      link(
        h,
        rand() < 0.45
          ? central[Math.floor(rand() * central.length)]
          : filler[Math.floor(rand() * filler.length)]
      );
    }
  });
  return { nodes: all, edges: lines.join("") };
}

const GRAPH = buildGraph();
const OUTLYING =
  "M286 54L258 70L247 80L255 101L304 102M255 101L188 120L152 200M255 101L223 171L300 165M247 80L190 170M258 70L256 101M334 690L374 800M638 331L700 310M638 331L560 260M638 331L480 300M640 434L560 425M640 434L520 380M640 434L600 425M259 690L240 655L262 740L254 765M132 700L153 775M132 590L150 762M133 690L128 620M78 640L76 676M200 715L239 662M303 735L259 690M242 730L240 663M27 363L10 320M25 255L43 200L52 170M25 255L0 330M25 255L27 363M25 255L40 235";

function Graph() {
  return (
    <svg width="689" height="806" viewBox="0 0 689 806" className="block">
      <path d={GRAPH.edges} stroke="#cfcecb" strokeOpacity="0.42" strokeWidth="1" fill="none" />
      <path d={OUTLYING} stroke="#d8d7d3" strokeOpacity="0.7" strokeWidth="1" fill="none" />
      {GRAPH.nodes.map((n, i) => (
        <circle key={i} cx={n.x} cy={n.y} r={n.r} fill={COLORS[n.c]} />
      ))}
    </svg>
  );
}

/* ---------- right sidebar ---------- */

const OUTLINE = [
  "1. title",
  "1.1: “The First Section.”",
  "1.2 “A Second Part.”",
  "1.3 “A Third Part.”",
];

const Guide = () => <div className="h-[50px] w-[34px] shrink-0 border-l border-(--guide)" />;

function Outline() {
  return (
    <section className="h-[448px] border-b-2 border-(--line) pt-[24px] text-[23.6px]">
      <div className="flex justify-center gap-[27px] text-(--icon)">
        <Search {...I} />
        <ChevronsDownUp {...I} />
      </div>
      <div className="mt-[49px] mr-[24px] ml-[22px] flex flex-col gap-[4px]">
        {OUTLINE.map((title, i) => (
          <div key={title} className="flex h-[49.82px] items-center pl-[12px]">
            {i > 0 && (
              <div className="flex pl-[12px] -mr-[12px] opacity-0">
                {OUTLINE.slice(0, i).map((t) => (
                  <Guide key={t} />
                ))}
              </div>
            )}
            <Fold open />
            <span className="pl-[13px]">{title}</span>
          </div>
        ))}
        <div className="flex h-[49.82px] items-center bg-(--hover) pl-[24px]">
          {OUTLINE.map((t) => (
            <Guide key={t} />
          ))}
          <span className="pt-[1px] pl-[25px]">1.4 “And a Fourth.”</span>
        </div>
      </div>
    </section>
  );
}

function References() {
  return (
    <section className="flex-1 pt-[38px] pl-[30px] text-[21.85px] whitespace-pre">
      <div className="flex h-[40px] items-center pr-[54px] pl-[11px]">
        <h6 className="flex-1 font-bold">References</h6>
        <span className="mr-[20px] flex h-[40px] w-[45px] items-center justify-center rounded-[12px] bg-[#f0efec] pt-[2px]">
          3
        </span>
        <Copy {...I} className="text-(--icon)" />
      </div>
      <div className="mr-[32px] pt-[41px]">
        <div className="flex justify-between border-b-2 border-(--line) pr-[22px] pb-[27px] pl-[11px]">
          <div className="leading-[37.7px]">
            <p>Jacoff, Rachel. <em>Reclaiming Paradiso :</em></p>
            <p><em>Dante in the Poetry of James Merrill and</em></p>
            <p><em>Charles Wright</em>. 2011.</p>
          </div>
          <div className="pt-[3px] text-(--icon)"><StickyIcon /></div>
        </div>
        <div className="border-b-2 border-(--line) pt-[38px] pb-[28px] pl-[11px] leading-[31.3px]">
          <p>Merrill, James. <em>The Book of Eprhraim</em>. Edited</p>
          <p>by Stephen Yenser, Alfred A. Knopf, 2018.</p>
        </div>
        <div className="flex justify-between pt-[38px] pr-[22px] pl-[11px] leading-[31.3px]">
          <div>
            <p>---. <em>The Changing Light at Sandover</em>.</p>
            <p>Alfred A. Knopf, 1982.</p>
          </div>
          <div className="text-(--icon)"><StickyIcon /></div>
        </div>
      </div>
    </section>
  );
}

function RightSidebar({ dark }) {
  return (
    <aside className="flex w-[691px] flex-col border-l-2 border-(--line) text-(--text)">
      <Outline />
      <div className="flex h-[80px] items-center gap-[6px] border-b-2 border-(--line) pl-[13px]">
        <div className="flex h-[50px] w-[68px] items-center justify-center text-(--icon)">
          <LinkArrowIcon incoming />
        </div>
        <div className="flex h-[50px] w-[68px] items-center justify-center bg-(--hover) text-[#fffcf5]">
          <GitFork {...I} />
        </div>
      </div>
      {dark ? null : (
        <>
          <div className="relative h-[808px] overflow-hidden border-b-2 border-(--line)">
            <Graph />
            <div className="absolute top-[47px] right-[52px] flex flex-col gap-[36px] text-(--icon)">
              <GearIcon size={33} />
              <WandSparkles {...I32} />
            </div>
          </div>
          <div className="flex h-[80px] items-center border-b-2 border-(--line) pl-[14px]">
            <div className="flex h-[50px] w-[68px] items-center justify-center bg-(--hover) text-[#fffcf5]">
              <Quote {...I} />
            </div>
          </div>
          <References />
        </>
      )}
    </aside>
  );
}

const StatusBar = () => (
  <footer className="absolute right-0 bottom-0 flex h-[66px] w-[402px] items-center border-t-2 border-l-2 border-[#1c1a12] bg-[#fffcf5] pt-[1px] pl-[17px] font-['Liberation_Mono',monospace] text-[21.85px] whitespace-pre text-black">
    <span>0 files</span>
    <AtSign size={32} strokeWidth={1.75} className="mr-[24px] ml-[23px] shrink-0 text-[#3a3528]" />
    <span>0 backlinks</span>
    <CircleCheck size={32} strokeWidth={1.75} className="ml-[18px] shrink-0 text-[#4cb35e]" />
  </footer>
);

/* ---------- themes ---------- */

const LIGHT =
  "[--bg:#fffcf5] [--accent:#f3ada0] [--headicon:#3a3022] [--line:#dfdfe0] [--icon:#3a3528] [--faint:#a9a69c] [--text:#000000] [--hover:#eae9e5] [--guide:#d6d5d1] [--mark:#fbe4ab] [--tag:#fceee7] [--comment:#3070dc] [--code:#fffcf5] [--call:#f6f0f1] [--callline:#d8c1e4]";
const DARK =
  "[--bg:#282828] [--accent:#f18c78] [--headicon:#fde3da] [--line:#363638] [--icon:#dbdad5] [--faint:#73726f] [--text:#fffcf5] [--hover:#373737] [--guide:#3b3b3b] [--mark:#675f4e] [--tag:#3c3230] [--comment:#68d8cc] [--code:#242424] [--call:#373037] [--callline:#6a5472]";

function Workspace({ dark }) {
  return (
    <div
      className={
        "flex h-[2100px] w-[3360px] flex-col overflow-hidden bg-(--bg) font-['Liberation_Mono',monospace] " +
        (dark ? DARK : LIGHT)
      }
    >
      <TopBar />
      <div className="flex h-[2020px]">
        <Ribbon />
        <FileTree />
        <Note />
        <RightSidebar dark={dark} />
      </div>
    </div>
  );
}

export default function App() {
  return (
    <div className="relative h-[2100px] w-[3360px] overflow-hidden">
      <Workspace />
      {/* The dark theme shows through two slanted wedges over the light one. */}
      <div
        aria-hidden="true"
        className="absolute inset-0 [clip-path:polygon(0_0,3222px_0,1421.5px_1873px,1633px_0,1257px_0,0_1530px)]"
      >
        <Workspace dark />
      </div>
      <StatusBar />
    </div>
  );
}
